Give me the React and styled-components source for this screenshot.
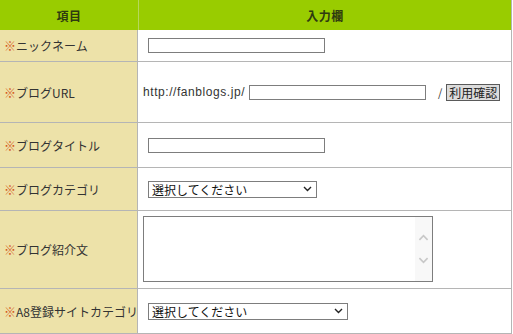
import React from "react";
import styled, { createGlobalStyle } from "styled-components";

const GlobalStyle = createGlobalStyle`
  html, body {
    margin: 0;
    padding: 0;
    background: #ffffff;
  }
  body {
    font-family: "Noto Sans CJK JP", "Liberation Sans", sans-serif;
    font-size: 12px;
    color: #333333;
  }
`;

const Form = styled.div({
    width: '511px',
    borderRight: '1px solid #b5b5b5',
});

const Row = styled.div(({ $height, $head }) => ({
    display: 'flex',
    height: `${$height}px`,
    boxSizing: 'border-box',
    borderBottom: $head ? 'none' : '1px solid #b5b5b5',
    background: $head ? '#99cc00' : '#ffffff',
}));

const HeadCell = styled.div(({ $wide }) => ({
    display: 'flex',
    alignItems: 'center',
    justifyContent: 'center',
    width: $wide ? 'auto' : '138px',
    flex: $wide ? 1 : 'none',
    borderRight: $wide ? 'none' : '1px solid #b6d85a',
    fontWeight: 'bold',
    fontSize: '12px',
    color: '#2f3a10',
    letterSpacing: '0.5px',
}));

const Label = styled.div({
    display: 'flex',
    alignItems: 'center',
    width: '138px',
    flex: 'none',
    paddingLeft: '4px',
    boxSizing: 'border-box',
    background: '#ede2a9',
    borderRight: '1px solid #b5b5b5',
    color: '#333333',
    fontSize: '12px',
    whiteSpace: 'nowrap',
});

const Mark = styled.span({
    color: '#d4571c',
});

const Field = styled.div(({ $top, $pad = 10 }) => ({
    display: 'flex',
    alignItems: $top ? 'flex-start' : 'center',
    flex: 1,
    paddingLeft: `${$pad}px`,
    paddingTop: $top ? '5px' : 0,
    gap: '4px',
    fontSize: '12px',
    color: '#333333',
}));

const TextInput = styled.input({
    width: '177px',
    height: '15px',
    boxSizing: 'border-box',
    border: '1px solid #7d7d7d',
    padding: 0,
    margin: 0,
    background: '#ffffff',
    outline: 'none',
});

const Prefix = styled.span({
    fontFamily: '"Liberation Sans", sans-serif',
    fontSize: '12px',
    color: '#333333',
    letterSpacing: '0.56px',
});

const Slash = styled.span({
    margin: '0 0 0 8px',
    fontSize: '11px',
    color: '#333333',
});

const CheckButton = styled.button({
    height: '17px',
    padding: '0 2px',
    margin: 0,
    border: '1px solid #5a5a5a',
    background: '#dcdcdc',
    fontFamily: '"Noto Sans CJK JP", sans-serif',
    fontSize: '12px',
    lineHeight: '15px',
    color: '#222222',
    borderRadius: 0,
});

const SelectWrap = styled.div(({ $width }) => ({
    position: 'relative',
    width: `${$width}px`,
    height: '17px',
}));

const Select = styled.select({
    appearance: 'none',
    width: '100%',
    height: '100%',
    boxSizing: 'border-box',
    border: '1px solid #7d7d7d',
    borderRadius: 0,
    padding: '0 0 0 3px',
    margin: 0,
    background: '#ffffff',
    fontFamily: '"Noto Sans CJK JP", sans-serif',
    fontSize: '12px',
    lineHeight: '15px',
    color: '#111111',
    outline: 'none',
});

const ChevronSlot = styled.span({
    position: 'absolute',
    right: '5px',
    top: 0,
    bottom: 0,
    display: 'flex',
    alignItems: 'center',
    pointerEvents: 'none',
});

const AreaBox = styled.div({
    display: 'flex',
    width: '290px',
    height: '66px',
    boxSizing: 'border-box',
    border: '1px solid #7d7d7d',
    background: '#ffffff',
});

const TextArea = styled.textarea({
    flex: 1,
    border: 'none',
    resize: 'none',
    outline: 'none',
    padding: '2px',
    margin: 0,
    overflow: 'hidden',
});

const ScrollStrip = styled.div({
    display: 'flex',
    flexDirection: 'column',
    alignItems: 'center',
    justifyContent: 'center',
    gap: '16px',
    width: '17px',
    background: '#f8f8f8',
});

const ChevronIcon = ({ up, color = '#222', w = 9, h = 6 }) => (
    <svg width={w} height={h} viewBox="0 0 9 6" style={{ display: 'block' }}>
        <path
            d={up ? 'M1 5 L4.5 1.5 L8 5' : 'M1 1 L4.5 4.5 L8 1'}
            fill="none"
            stroke={color}
            strokeWidth="1.4"
        />
    </svg>
);

const Dropdown = ({ width }) => (
    <SelectWrap $width={width}>
        <Select defaultValue="">
            <option value="">選択してください</option>
        </Select>
        <ChevronSlot>
            <ChevronIcon />
        </ChevronSlot>
    </SelectWrap>
);

const rows = [
    { label: 'ニックネーム', height: 32, kind: 'text' },
    { label: 'ブログURL', height: 61, kind: 'url' },
    { label: 'ブログタイトル', height: 45, kind: 'text' },
    { label: 'ブログカテゴリ', height: 43, kind: 'select', width: 169 },
    { label: 'ブログ紹介文', height: 78, kind: 'area' },
    { label: 'A8登録サイトカテゴリ', height: 45, kind: 'select', width: 200 },
];

const renderField = (row) => {
    switch (row.kind) {
        case 'url':
            return (
                <Field $pad={5}>
                    <Prefix>http://fanblogs.jp/</Prefix>
                    <TextInput type="text" />
                    <Slash>/</Slash>
                    <CheckButton type="button">利用確認</CheckButton>
                </Field>
            );
        case 'select':
            return (
                <Field>
                    <Dropdown width={row.width} />
                </Field>
            );
        case 'area':
            return (
                <Field $top $pad={5}>
                    <AreaBox>
                        <TextArea />
                        <ScrollStrip>
                            <ChevronIcon up color="#c8c8c8" w={11} h={7} />
                            <ChevronIcon color="#c8c8c8" w={11} h={7} />
                        </ScrollStrip>
                    </AreaBox>
                </Field>
            );
        default:
            return (
                <Field>
                    <TextInput type="text" />
                </Field>
            );
    }
};

const App = () => {
    return (
        <>
            <GlobalStyle />
            <Form>
                <Row $head $height={30}>
                    <HeadCell>項目</HeadCell>
                    <HeadCell $wide>入力欄</HeadCell>
                </Row>
                {rows.map((row) => (
                    <Row key={row.label} $height={row.height}>
                        <Label>
                            <Mark>※</Mark>
                            {row.label}
                        </Label>
                        {renderField(row)}
                    </Row>
                ))}
            </Form>
        </>
    );
};

export default App;
